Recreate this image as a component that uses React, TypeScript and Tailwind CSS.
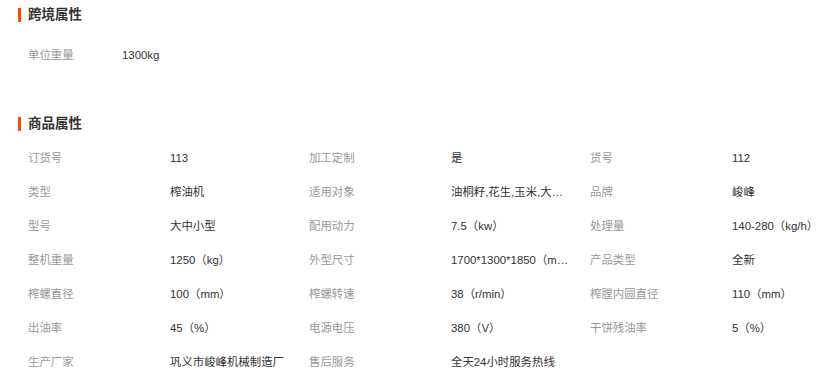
const font = { fontFamily: '"Liberation Sans", "Noto Sans CJK SC", sans-serif' }

const crossBorder = [{ label: '单位重量', value: '1300kg' }]

const goodsAttrs = [
  { label: '订货号', value: '113' },
  { label: '加工定制', value: '是' },
  { label: '货号', value: '112' },
  { label: '类型', value: '榨油机' },
  { label: '适用对象', value: '油桐籽,花生,玉米,大豆,芝麻' },
  { label: '品牌', value: '峻峰' },
  { label: '型号', value: '大中小型' },
  { label: '配用动力', value: '7.5（kw）' },
  { label: '处理量', value: '140-280（kg/h）' },
  { label: '整机重量', value: '1250（kg）' },
  { label: '外型尺寸', value: '1700*1300*1850（mm）' },
  { label: '产品类型', value: '全新' },
  { label: '榨螺直径', value: '100（mm）' },
  { label: '榨螺转速', value: '38（r/min）' },
  { label: '榨膛内圆直径', value: '110（mm）' },
  { label: '出油率', value: '45（%）' },
  { label: '电源电压', value: '380（V）' },
  { label: '干饼残油率', value: '5（%）' },
  { label: '生产厂家', value: '巩义市峻峰机械制造厂' },
  { label: '售后服务', value: '全天24小时服务热线' },
]

function SectionTitle({ title }: { title: string }) {
  return (
    <div className="flex items-center h-[30px]">
      <div className="w-[3px] h-[14px] bg-[#ff4a00] mr-[7px]" />
      <span className="text-[13.5px] font-bold text-[#333]">{title}</span>
    </div>
  )
}

export default function App() {
  return (
    <div className="w-[835px] h-[385px] overflow-hidden bg-white pl-[18px]" style={font}>
      {/* 跨境属性 */}
      <SectionTitle title="跨境属性" />
      <div className="pl-[10px] mt-[9px]">
        {crossBorder.map((a) => (
          <div key={a.label} className="flex items-center h-[34px] text-[11.4px]">
            <span className="w-[94px] text-[#999]">{a.label}</span>
            <span className="text-[#333]">{a.value}</span>
          </div>
        ))}
      </div>

      {/* 商品属性 */}
      <div className="mt-[36px]">
        <SectionTitle title="商品属性" />
      </div>
      <div className="pl-[10px] mt-[3px] grid grid-cols-[281px_281px_281px] w-[843px]">
        {goodsAttrs.map((a) => (
          <div key={a.label} className="flex items-center h-[34px] text-[11.4px]">
            <span className="w-[142px] shrink-0 text-[#999]">{a.label}</span>
            <span className="w-[118px] truncate text-[#333]">{a.value}</span>
          </div>
        ))}
      </div>
    </div>
  )
}
